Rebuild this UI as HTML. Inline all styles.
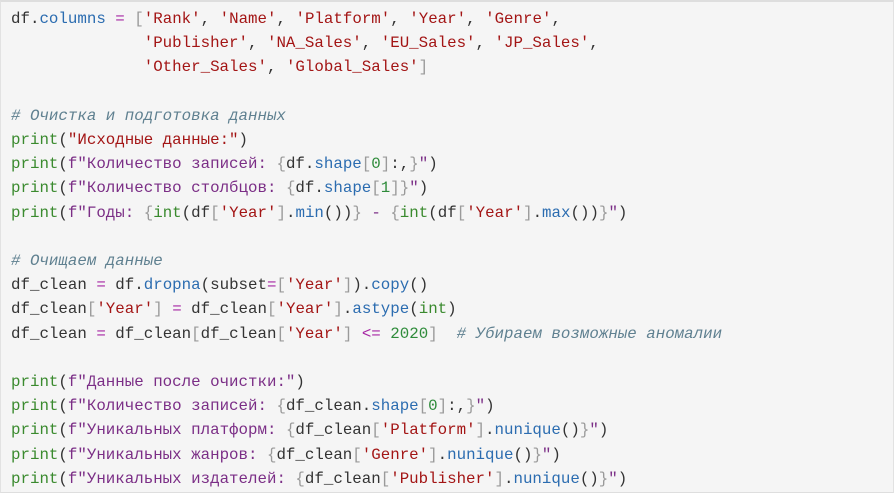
<!DOCTYPE html>
<html><head><meta charset="utf-8"><style>
html,body{margin:0;padding:0;width:894px;height:494px;overflow:hidden;background:#fff}
.box{position:absolute;left:0;top:0;width:892px;height:490px;background:#f5f5f5;border-top:2px solid #dedede;border-left:1px solid #e2e2e2;border-bottom:1px solid #dedede;border-right:1px solid #e2e2e2}
pre{margin:0;position:absolute;left:11px;top:7px;font-family:"Liberation Mono","DejaVu Sans Mono",monospace;font-size:15.8px;line-height:24.2px;color:#333}
.p{color:#3a8a2e}.s{color:#a31515}.f{color:#7b2e86}.b{color:#9a9a9a}.o{color:#a626a4}.a{color:#2b6cb0}.n{color:#2e8b3a}.c{color:#5f8090;font-style:italic}
</style></head><body><div class="box"></div><pre>df.<span class="a">columns</span> <span class="o">=</span> <span class="b">[</span><span class="s">'Rank'</span>, <span class="s">'Name'</span>, <span class="s">'Platform'</span>, <span class="s">'Year'</span>, <span class="s">'Genre'</span>,
              <span class="s">'Publisher'</span>, <span class="s">'NA_Sales'</span>, <span class="s">'EU_Sales'</span>, <span class="s">'JP_Sales'</span>,
              <span class="s">'Other_Sales'</span>, <span class="s">'Global_Sales'</span><span class="b">]</span>

<span class="c"># Очистка и подготовка данных</span>
<span class="p">print</span>(<span class="s">"Исходные данные:"</span>)
<span class="p">print</span>(<span class="f">f"Количество записей: </span><span class="b">{</span>df.<span class="a">shape</span><span class="b">[</span><span class="n">0</span><span class="b">]</span>:,<span class="b">}</span><span class="f">"</span>)
<span class="p">print</span>(<span class="f">f"Количество столбцов: </span><span class="b">{</span>df.<span class="a">shape</span><span class="b">[</span><span class="n">1</span><span class="b">]</span><span class="b">}</span><span class="f">"</span>)
<span class="p">print</span>(<span class="f">f"Годы: </span><span class="b">{</span><span class="p">int</span>(df<span class="b">[</span><span class="s">'Year'</span><span class="b">]</span>.<span class="a">min</span>())<span class="b">}</span><span class="f"> - </span><span class="b">{</span><span class="p">int</span>(df<span class="b">[</span><span class="s">'Year'</span><span class="b">]</span>.<span class="a">max</span>())<span class="b">}</span><span class="f">"</span>)

<span class="c"># Очищаем данные</span>
df_clean <span class="o">=</span> df.<span class="a">dropna</span>(subset<span class="o">=</span><span class="b">[</span><span class="s">'Year'</span><span class="b">]</span>).<span class="a">copy</span>()
df_clean<span class="b">[</span><span class="s">'Year'</span><span class="b">]</span> <span class="o">=</span> df_clean<span class="b">[</span><span class="s">'Year'</span><span class="b">]</span>.<span class="a">astype</span>(<span class="p">int</span>)
df_clean <span class="o">=</span> df_clean<span class="b">[</span>df_clean<span class="b">[</span><span class="s">'Year'</span><span class="b">]</span> <span class="o">&lt;=</span> <span class="n">2020</span><span class="b">]</span>  <span class="c"># Убираем возможные аномалии</span>

<span class="p">print</span>(<span class="f">f"Данные после очистки:"</span>)
<span class="p">print</span>(<span class="f">f"Количество записей: </span><span class="b">{</span>df_clean.<span class="a">shape</span><span class="b">[</span><span class="n">0</span><span class="b">]</span>:,<span class="b">}</span><span class="f">"</span>)
<span class="p">print</span>(<span class="f">f"Уникальных платформ: </span><span class="b">{</span>df_clean<span class="b">[</span><span class="s">'Platform'</span><span class="b">]</span>.<span class="a">nunique</span>()<span class="b">}</span><span class="f">"</span>)
<span class="p">print</span>(<span class="f">f"Уникальных жанров: </span><span class="b">{</span>df_clean<span class="b">[</span><span class="s">'Genre'</span><span class="b">]</span>.<span class="a">nunique</span>()<span class="b">}</span><span class="f">"</span>)
<span class="p">print</span>(<span class="f">f"Уникальных издателей: </span><span class="b">{</span>df_clean<span class="b">[</span><span class="s">'Publisher'</span><span class="b">]</span>.<span class="a">nunique</span>()<span class="b">}</span><span class="f">"</span>)</pre></body></html>
